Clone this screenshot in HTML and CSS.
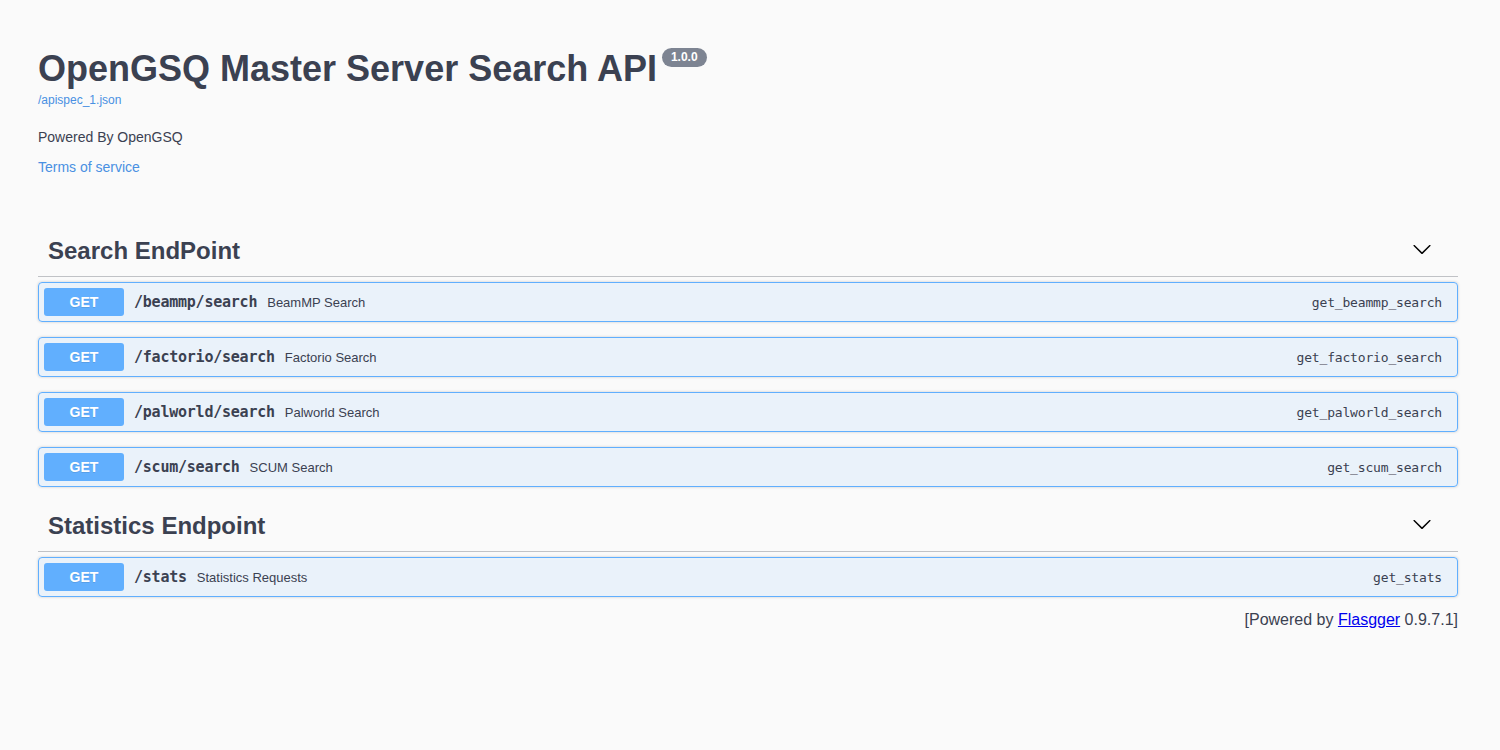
FILE: index.html
```html
<!DOCTYPE html>
<html>
<head>
<meta charset="utf-8">
<title>Flasgger</title>
<link rel="stylesheet" href="styles.css">
</head>
<body>
<div class="wrapper">
  <div class="info">
    <hgroup class="main">
      <h2 class="title">OpenGSQ Master Server Search API <small class="version">1.0.0</small></h2>
      <a class="spec-link" href="#">/apispec_1.json</a>
    </hgroup>
    <div class="description"><p>Powered By OpenGSQ</p></div>
    <div class="tos"><a href="#">Terms of service</a></div>
  </div>

  <section class="tag-section">
    <h3 class="opblock-tag"><span class="tag-name">Search EndPoint</span>
      <svg class="arrow" width="20" height="20" viewBox="0 0 20 20"><path d="M17.418 6.109c.272-.268.709-.268.979 0s.271.701 0 .969l-7.908 7.83c-.27.268-.707.268-.979 0l-7.908-7.830c-.27-.268-.27-.701 0-.969.271-.268.709-.268.979 0L10 13.250l7.418-7.141z"/></svg>
    </h3>
    <div class="opblock">
      <span class="method">GET</span>
      <span class="path">/beammp/search</span>
      <span class="summary">BeamMP Search</span>
      <span class="op-id">get_beammp_search</span>
    </div>
    <div class="opblock">
      <span class="method">GET</span>
      <span class="path">/factorio/search</span>
      <span class="summary">Factorio Search</span>
      <span class="op-id">get_factorio_search</span>
    </div>
    <div class="opblock">
      <span class="method">GET</span>
      <span class="path">/palworld/search</span>
      <span class="summary">Palworld Search</span>
      <span class="op-id">get_palworld_search</span>
    </div>
    <div class="opblock">
      <span class="method">GET</span>
      <span class="path">/scum/search</span>
      <span class="summary">SCUM Search</span>
      <span class="op-id">get_scum_search</span>
    </div>
  </section>

  <section class="tag-section">
    <h3 class="opblock-tag"><span class="tag-name">Statistics Endpoint</span>
      <svg class="arrow" width="20" height="20" viewBox="0 0 20 20"><path d="M17.418 6.109c.272-.268.709-.268.979 0s.271.701 0 .969l-7.908 7.83c-.27.268-.707.268-.979 0l-7.908-7.830c-.27-.268-.27-.701 0-.969.271-.268.709-.268.979 0L10 13.250l7.418-7.141z"/></svg>
    </h3>
    <div class="opblock">
      <span class="method">GET</span>
      <span class="path">/stats</span>
      <span class="summary">Statistics Requests</span>
      <span class="op-id">get_stats</span>
    </div>
  </section>

  <div class="footer">[Powered by <a href="#">Flasgger</a> 0.9.7.1]</div>
</div>
</body>
</html>
```

FILE: styles.css
```css
html, body {
  margin: 0;
  padding: 0;
  background: #fafafa;
}
body {
  font-family: "Liberation Sans", Arial, sans-serif;
  color: #3b4151;
}
.wrapper {
  width: 1420px;
  margin: 0 auto 0 38px;
  padding-bottom: 40px;
}
.info {
  margin: 50px 0 50px;
}
.main {
  margin: 0;
}
.title {
  font-size: 36px;
  font-weight: 700;
  margin: 0;
  line-height: 38px;
  color: #3b4151;
}
.version {
  display: inline-block;
  font-size: 12px;
  line-height: 15px;
  font-weight: 700;
  color: #fff;
  background: #7d8492;
  border-radius: 57px;
  padding: 2px 9px;
  vertical-align: top;
  position: relative;
  top: -2px;
  margin-left: -5px;
}
.spec-link {
  display: block;
  font-size: 12px;
  color: #4990e2;
  text-decoration: none;
  margin-top: 5px;
}
.description p {
  font-size: 14px;
  margin: 22px 0 0;
}
.tos {
  margin-top: 13px;
}
.tos a {
  font-size: 14px;
  color: #4990e2;
  text-decoration: none;
}
.tag-section {
  margin-bottom: 0;
}
.opblock-tag {
  display: flex;
  align-items: center;
  justify-content: space-between;
  margin: 0 0 5px;
  padding: 10px 26px 10px 10px;
  height: 30px;
  border-bottom: 1px solid rgba(59, 65, 81, 0.3);
  font-size: 24px;
  font-weight: 700;
  color: #3b4151;
}
.arrow {
  fill: #000;
  margin-bottom: 4px;
}
.opblock {
  display: flex;
  align-items: center;
  height: 28px;
  padding: 5px;
  margin: 0 0 15px;
  border: 1px solid #61affe;
  border-radius: 4px;
  background: rgba(97, 175, 254, 0.1);
  box-shadow: 0 0 3px rgba(0, 0, 0, 0.19);
}
.opblock:last-child {
  margin-bottom: 14px;
}
.method {
  width: 80px;
  height: 28px;
  line-height: 28px;
  text-align: center;
  border-radius: 3px;
  background: #61affe;
  color: #fff;
  font-size: 14px;
  font-weight: 700;
  text-shadow: 0 1px 0 rgba(0, 0, 0, 0.1);
}
.path {
  font-family: "DejaVu Sans Mono", monospace;
  font-size: 15px;
  letter-spacing: -0.23px;
  font-weight: 700;
  padding: 0 10px;
  color: #3b4151;
}
.summary {
  flex: 1;
  font-size: 13px;
  color: #3b4151;
}
.op-id {
  font-family: "DejaVu Sans Mono", monospace;
  font-size: 13px;
  letter-spacing: -0.17px;
  padding-right: 10px;
  color: #3b4151;
}
.footer {
  text-align: right;
  font-size: 16px;
  color: #3b4151;
  margin-top: 1px;
}
.footer a {
  color: #0000ee;
}
```
